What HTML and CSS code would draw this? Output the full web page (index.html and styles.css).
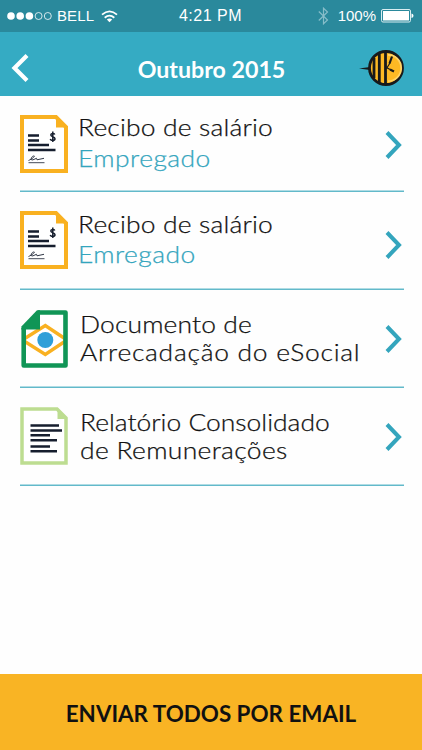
FILE: index.html
```html
<!DOCTYPE html>
<html lang="pt-BR">
<head>
<meta charset="utf-8">
<title>Outubro 2015</title>
<link rel="stylesheet" href="styles.css">
</head>
<body>
<svg class="defs" width="0" height="0" aria-hidden="true">
  <symbol id="next" viewBox="0 0 18 30"><path d="M2 2.500 14 15 2 27.500" fill="none" stroke="#34a5bd" stroke-width="4"/></symbol>
  <symbol id="receipt" viewBox="0 0 48 58">
    <path d="M2 2H36L46 12V56H2Z" fill="#fff" stroke="#f9b121" stroke-width="4"/>
    <path d="M36 1V12.500H47Z" fill="#f9b121"/>
    <path d="M8 20.500H19M8 25.500H19M8 30H29M8 35H35.500" stroke="#161e2e" stroke-width="2.500"/>
    <path d="M8.500 47.700H24.500" stroke="#444b58" stroke-width="1"/>
    <path d="M8.500 45.500C13 43.500 16 40.500 13.500 41C11 41.500 10 46 13 44.800L16.500 43.300L17 44.800L24 43.300" fill="none" stroke="#303746" stroke-width="1"/>
    <path d="M34.800 19.500C34 18 30.800 18 30.800 20C30.800 22 35 21.500 35 23.700C35 26 31 26 30.200 24M32.800 16.500V27" fill="none" stroke="#161e2e" stroke-width="1.500"/>
  </symbol>
</svg>
<div class="statusbar">
  <div class="carrier">
    <svg width="46" height="12" viewBox="0 0 46 12"><g fill="#fff"><circle cx="4" cy="6" r="3.800"/><circle cx="13.200" cy="6" r="3.800"/><circle cx="22.400" cy="6" r="3.800"/></g><g fill="none" stroke="#fff" stroke-width=".8"><circle cx="31.600" cy="6" r="3.500"/><circle cx="40.800" cy="6" r="3.500"/></g></svg>
    <span class="bell">BELL</span>
    <svg class="wifi" width="17" height="13" viewBox="0 0 17 13"><g fill="none" stroke="#fff" stroke-width="1.800"><path d="M1 4.700Q8.500-2 16 4.700"/><path d="M3.700 7.700Q8.500 3.500 13.300 7.700"/></g><path d="M5.800 9.500Q8.500 7.300 11.200 9.500L8.500 12.300Z" fill="#fff"/></svg>
  </div>
  <span class="clock">4:21 PM</span>
  <div class="power">
    <svg width="11" height="18" viewBox="0 0 11 18"><path d="M.8 4.500 9.500 13 5.500 16.800V1.200L9.500 5 .8 13.500" fill="none" stroke="#86bdc9" stroke-width="1.200"/></svg>
    <span class="percent">100%</span>
    <svg class="battery" width="33" height="14" viewBox="0 0 33 14"><rect x=".5" y=".5" width="29" height="12.500" rx="1.500" fill="none" stroke="#d9edf1"/><rect x="2" y="2" width="26" height="9.500" fill="#fff"/><path d="M30.500 4.500Q32.500 4.800 32.500 6.800T30.500 9Z" fill="#fff"/></svg>
  </div>
</div>
<header class="header">
  <svg class="back" width="18" height="30" viewBox="0 0 18 30"><path d="M16 2.500 3.500 15 16 27.500" fill="none" stroke="#fff" stroke-width="4.200"/></svg>
  <h1 class="title">Outubro 2015</h1>
  <svg class="bee" width="46" height="38" viewBox="0 0 46 38">
    <path d="M0 19.500 11 18V21Z" fill="#17191b"/>
    <circle cx="27" cy="19" r="16.500" fill="#fdb924" stroke="#17191b" stroke-width="2.800"/>
    <path d="M29 5.800A13.200 13.200 0 0 1 29 32.200" fill="none" stroke="#ffd366" stroke-width="1.800"/>
    <path d="M15 9V29M20.300 4V34M26.500 3V35" stroke="#17191b" stroke-width="2.800"/>
    <path d="M27.500 19.500 31 14M28 18.700 31 20.500" stroke="#17191b" stroke-width="1.200"/>
    <path d="M30.500 14.500 33 7.500M31 20.500 35 22.500" stroke="#17191b" stroke-width="2.200"/>
  </svg>
</header>
<main class="documents">
  <a class="item first">
    <svg class="icon" width="48" height="58"><use href="#receipt"/></svg>
    <div class="text"><span class="line receipt-title">Recibo de salário</span><span class="line role">Empregado</span></div>
    <svg class="next" width="18" height="30"><use href="#next"/></svg>
  </a>
  <a class="item second">
    <svg class="icon" width="48" height="58"><use href="#receipt"/></svg>
    <div class="text"><span class="line receipt-title">Recibo de salário</span><span class="line role">Emregado</span></div>
    <svg class="next" width="18" height="30"><use href="#next"/></svg>
  </a>
  <a class="item third">
    <svg class="icon" width="48" height="58" viewBox="0 0 48 58">
      <path d="M18 2H46V56H3V18Z" fill="#fff"/>
      <path d="M4 29 25.300 15.500 45.500 29M4 31 25.300 44.500 45.500 31" fill="none" stroke="#f9b121" stroke-width="3.400"/>
      <path d="M18 2.500H45.500V55.500H3.700V18" fill="none" stroke="#109556" stroke-width="4.600" stroke-linejoin="round"/>
      <path d="M17 .2H20V19.500H1.400V16.500Z" fill="#109556"/>
      <circle cx="25.300" cy="30" r="8" fill="#2f9fd8"/>
    </svg>
    <div class="text"><span class="line document">Documento de</span><span class="line collection">Arrecadação do eSocial</span></div>
    <svg class="next" width="18" height="30"><use href="#next"/></svg>
  </a>
  <a class="item fourth">
    <svg class="icon" width="48" height="58" viewBox="0 0 48 58">
      <path d="M2 2H37L46 11V56H2Z" fill="#fff" stroke="#bddd91" stroke-width="3.500"/><path d="M37.500 1V12H47.500Z" fill="#bddd91"/>
      <path d="M10.500 18.500H39M10.500 23.500H42M10.500 28.300H30M10.500 33.300H37M10.500 39.500H30M10.500 44.300H37" stroke="#161e2e" stroke-width="2.500"/>
    </svg>
    <div class="text"><span class="line report">Relatório Consolidado</span><span class="line earnings">de Remunerações</span></div>
    <svg class="next" width="18" height="30"><use href="#next"/></svg>
  </a>
</main>
<button class="send"><span>ENVIAR TODOS POR EMAIL</span></button>
</body>
</html>
```
FILE: styles.css
```css
* { box-sizing: border-box; }
body { margin: 0; width: 422px; height: 750px; display: flex; flex-direction: column; background: #fefefe; font-family: Lato, "Open Sans", sans-serif; overflow: hidden; }
.defs { position: absolute; }
.statusbar { height: 32px; flex: none; display: grid; grid-template-columns: 1fr auto 1fr; align-items: center; padding: 0 8px 0 7px; background: #2a899c; color: #fff; font: 15px/32px "Liberation Sans", sans-serif; }
.carrier, .power { display: flex; align-items: center; }
.bell { margin-left: 4px; letter-spacing: .1px; }
.wifi { margin-left: 7px; }
.clock { font-size: 16px; letter-spacing: .5px; }
.power { justify-content: flex-end; }
.percent { margin-left: 9px; }
.battery { margin-left: 5px; }
.header { height: 64px; flex: none; display: flex; align-items: center; background: #35abc3; padding: 8px 17px 0 11px; }
.title { flex: 1; margin: 2px 0 0 35px; text-align: center; color: #fff; font-size: 23.2px; line-height: 30px; font-weight: 700; }
.bee { margin-top: -1px; }
.documents { flex: 1; padding: 0 18px 0 20px; }
.item { height: 96px; display: flex; align-items: flex-start; padding-top: 18px; box-shadow: inset 0 -1.5px #62b9ca; }
.second, .third, .fourth { height: 98px; }
.icon { flex: none; margin-top: 1px; }
.third .icon { margin-top: 2px; }
.text { flex: 1; margin-left: 10px; color: #111; font-size: 23.5px; font-weight: 300; white-space: nowrap; -webkit-text-stroke: .25px currentColor; }
.first .text { margin-top: -1px; }
.third .text, .fourth .text { margin: 2px 0 0 12px; }
.line { display: block; width: 245px; line-height: 28px; transform: scaleX(1.125); transform-origin: left; }
.role { line-height: 32px; color: #34a5bd; letter-spacing: .4px; }
.first .role { line-height: 34px; }
.receipt-title { letter-spacing: .15px; }
.document { letter-spacing: .12px; }
.collection { letter-spacing: .65px; }
.report { letter-spacing: 0; }
.earnings { letter-spacing: .3px; }
.next { flex: none; margin: 16px 1px 0 0; }
.second .next { margin-top: 20px; }
.send { height: 76px; flex: none; border: 0; padding: 3px 0 0; background: #f9b424; color: #111; font: 700 22.4px/30px Lato, sans-serif; }
```
